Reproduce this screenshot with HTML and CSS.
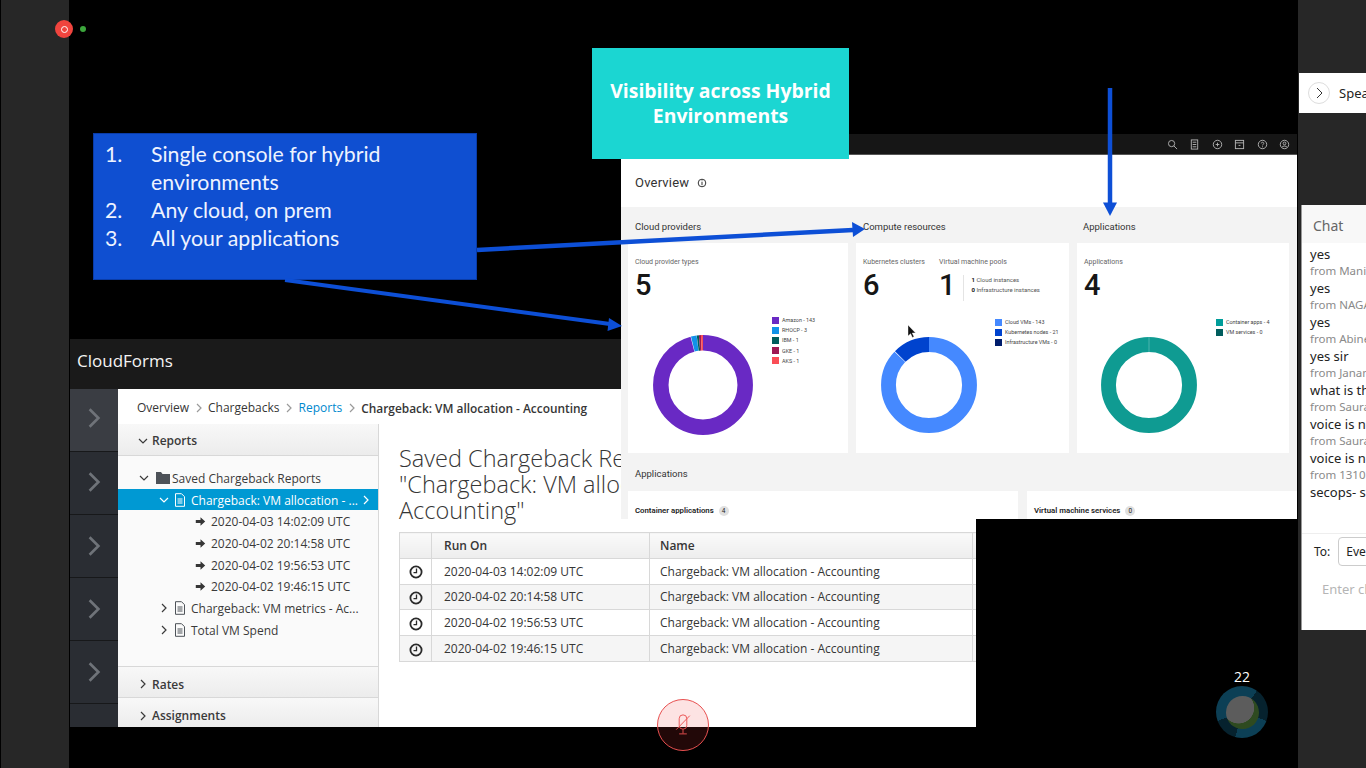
FILE: index.html
```html
<!doctype html>
<html lang="en">
<head>
  <meta charset="utf-8">
  <title>Visibility across Hybrid Environments</title>
  <link rel="stylesheet" href="styles.css">
</head>
<body>
  <svg class="defs" width="0" height="0">
    <symbol id="chev-r" viewBox="0 0 10 10"><polyline points="3,1 7,5 3,9" fill="none" stroke="currentColor" stroke-width="1.2"/></symbol>
    <symbol id="chev-d" viewBox="0 0 10 10"><polyline points="1,3 5,7 9,3" fill="none" stroke="currentColor" stroke-width="1.2"/></symbol>
    <symbol id="doc" viewBox="0 0 12 14"><path d="M1.5 .7h6l3 3v9.6h-9z" fill="none" stroke="currentColor"/><path d="M3.5 6h5M3.5 8h5M3.5 10h5" stroke="currentColor"/></symbol>
    <symbol id="arrow" viewBox="0 0 14 14"><path d="M1 5h6V1.5L13 7l-6 5.500V9H1z" fill="currentColor"/></symbol>
    <symbol id="clock" viewBox="0 0 14 14"><circle cx="7" cy="7" r="5.600" fill="none" stroke="currentColor" stroke-width="1.800"/><path d="M7.500 3.500V7.600H4.500" fill="none" stroke="currentColor" stroke-width="1.300"/></symbol>
  </svg>

  <aside class="rail-left">
    <span class="rec"><span class="rec-ring"></span></span>
  </aside>

  <main class="stage">
    <span class="live-dot"></span>

    <section class="cf">
      <header class="cf-head">CloudForms</header>
      <div class="cf-body">
        <nav class="cf-rail">
          <div class="rail-item first"><svg class="rail-chev"><use href="#chev-r"/></svg></div>
          <div class="rail-item second"><svg class="rail-chev"><use href="#chev-r"/></svg></div>
          <div class="rail-item"><svg class="rail-chev"><use href="#chev-r"/></svg></div>
          <div class="rail-item"><svg class="rail-chev"><use href="#chev-r"/></svg></div>
          <div class="rail-item"><svg class="rail-chev"><use href="#chev-r"/></svg></div>
          <div class="rail-item"></div>
        </nav>
        <div class="cf-page">
          <div class="crumbs">
            <span>Overview</span><svg class="crumb-sep"><use href="#chev-r"/></svg>
            <span>Chargebacks</span><svg class="crumb-sep"><use href="#chev-r"/></svg>
            <span class="crumb-link">Reports</span><svg class="crumb-sep"><use href="#chev-r"/></svg>
            <span class="crumb-now">Chargeback: VM allocation - Accounting</span>
          </div>
          <div class="cf-cols">
            <div class="side">
              <div class="acc-head"><svg class="ic10"><use href="#chev-d"/></svg>Reports</div>
              <div class="tree">
                <div class="node lvl0"><svg class="ic10"><use href="#chev-d"/></svg>
                  <svg class="folder" viewBox="0 0 14 12"><path d="M0 0h5l1.500 2H14v10H0z" fill="#4d5258"/></svg>Saved Chargeback Reports</div>
                <div class="node lvl1 selected"><svg class="ic10"><use href="#chev-d"/></svg><svg class="doc"><use href="#doc"/></svg>Chargeback: VM allocation - ...<svg class="ic10 sel-chev"><use href="#chev-r"/></svg></div>
                <div class="node lvl2"><svg class="ar"><use href="#arrow"/></svg>2020-04-03 14:02:09 UTC</div>
                <div class="node lvl2"><svg class="ar"><use href="#arrow"/></svg>2020-04-02 20:14:58 UTC</div>
                <div class="node lvl2"><svg class="ar"><use href="#arrow"/></svg>2020-04-02 19:56:53 UTC</div>
                <div class="node lvl2"><svg class="ar"><use href="#arrow"/></svg>2020-04-02 19:46:15 UTC</div>
                <div class="node lvl1"><svg class="ic10"><use href="#chev-r"/></svg><svg class="doc"><use href="#doc"/></svg>Chargeback: VM metrics - Ac...</div>
                <div class="node lvl1"><svg class="ic10"><use href="#chev-r"/></svg><svg class="doc"><use href="#doc"/></svg>Total VM Spend</div>
              </div>
              <div class="acc-head closed"><svg class="ic10"><use href="#chev-r"/></svg>Rates</div>
              <div class="acc-head closed last"><svg class="ic10"><use href="#chev-r"/></svg>Assignments</div>
            </div>
            <div class="report">
              <h1>Saved Chargeback Report<br>"Chargeback: VM allocation -<br>Accounting"</h1>
              <table>
                <thead><tr><th class="c-ic"></th><th class="c-run">Run On</th><th class="c-name">Name</th><th></th></tr></thead>
                <tbody>
                  <tr><td class="c-ic"><svg class="clock"><use href="#clock"/></svg></td><td class="c-run">2020-04-03 14:02:09 UTC</td><td class="c-name">Chargeback: VM allocation - Accounting</td><td></td></tr>
                  <tr><td class="c-ic"><svg class="clock"><use href="#clock"/></svg></td><td class="c-run">2020-04-02 20:14:58 UTC</td><td class="c-name">Chargeback: VM allocation - Accounting</td><td></td></tr>
                  <tr><td class="c-ic"><svg class="clock"><use href="#clock"/></svg></td><td class="c-run">2020-04-02 19:56:53 UTC</td><td class="c-name">Chargeback: VM allocation - Accounting</td><td></td></tr>
                  <tr><td class="c-ic"><svg class="clock"><use href="#clock"/></svg></td><td class="c-run">2020-04-02 19:46:15 UTC</td><td class="c-name">Chargeback: VM allocation - Accounting</td><td></td></tr>
                </tbody>
              </table>
            </div>
          </div>
        </div>
      </div>
    </section>

    <section class="ov">
      <div class="ov-bar">
        <svg class="ov-ic" viewBox="0 0 12 12"><circle cx="5" cy="5" r="3.400"/><path d="M7.500 7.500L11 11"/></svg>
        <svg class="ov-ic" viewBox="0 0 12 12"><rect x="2.500" y="1" width="7" height="10"/><path d="M4 3.500h4M4 6h4M4 8.500h4"/></svg>
        <svg class="ov-ic" viewBox="0 0 12 12"><circle cx="6" cy="6" r="4.600"/><path d="M4 6h4M6 4v4"/></svg>
        <svg class="ov-ic" viewBox="0 0 12 12"><rect x="1.500" y="1.500" width="9" height="9"/><path d="M1.500 4.200h9M5 7h2"/></svg>
        <svg class="ov-ic" viewBox="0 0 12 12"><circle cx="6" cy="6" r="4.600"/><path d="M4.700 4.800c0-1.700 2.700-1.700 2.700 0 0 1-1.400 1-1.400 2.200M6 8v1"/></svg>
        <svg class="ov-ic" viewBox="0 0 12 12"><circle cx="6" cy="6" r="4.600"/><circle cx="6" cy="4.800" r="1.500"/><path d="M3 9.200c1-2 5-2 6 0"/></svg>
      </div>
      <div class="ov-title">Overview
        <svg class="ov-info" viewBox="0 0 10 10"><circle cx="5" cy="5" r="3.800" fill="none" stroke="#333"/><path d="M5 4v3.200M5 2.500v.8" stroke="#333"/></svg>
      </div>
      <div class="ov-main">
        <div class="ov-cols">
          <div class="ov-col col-a">
            <h2>Cloud providers</h2>
            <div class="card">
              <div class="stat-label">Cloud provider types</div>
              <div class="stat-num">5</div>
              <ul class="legend lg-a">
                <li><i class="sw" style="background:#6929c4"></i>Amazon - 143</li>
                <li><i class="sw" style="background:#1192e8"></i>RHOCP - 3</li>
                <li><i class="sw" style="background:#005d5d"></i>IBM - 1</li>
                <li><i class="sw" style="background:#9f1853"></i>GKE - 1</li>
                <li><i class="sw" style="background:#fa4d56"></i>AKS - 1</li>
              </ul>
              <svg class="donut d-a" viewBox="0 0 100 100">
                <g fill="none" stroke-width="15.500" transform="rotate(-90 50 50)">
                  <circle cx="50" cy="50" r="42.200" pathLength="149" stroke="#6929c4" stroke-dasharray="143 6"/>
                  <circle cx="50" cy="50" r="42.200" pathLength="149" stroke="#1192e8" stroke-dasharray="2.700 146.300" stroke-dashoffset="-143.200"/>
                  <circle cx="50" cy="50" r="42.200" pathLength="149" stroke="#005d5d" stroke-dasharray="1 148" stroke-dashoffset="-146"/>
                  <circle cx="50" cy="50" r="42.200" pathLength="149" stroke="#9f1853" stroke-dasharray="1 148" stroke-dashoffset="-147"/>
                  <circle cx="50" cy="50" r="42.200" pathLength="149" stroke="#fa4d56" stroke-dasharray="1 148" stroke-dashoffset="-148"/>
                </g>
              </svg>
            </div>
          </div>
          <div class="ov-col col-b">
            <h2>Compute resources</h2>
            <div class="card">
              <div class="stat-row">
                <div class="stat-k">
                  <div class="stat-label">Kubernetes clusters</div>
                  <div class="stat-num">6</div>
                </div>
                <div>
                  <div class="stat-label">Virtual machine pools</div>
                  <div class="pool">
                    <div class="stat-num">1</div>
                    <div class="pool-list"><div><b>1</b> Cloud instances</div><div><b>0</b> Infrastructure instances</div></div>
                  </div>
                </div>
              </div>
              <ul class="legend lg-b">
                <li><i class="sw" style="background:#4589ff"></i>Cloud VMs - 143</li>
                <li><i class="sw" style="background:#0043ce"></i>Kubernetes nodes - 21</li>
                <li><i class="sw" style="background:#001d6c"></i>Infrastructure VMs - 0</li>
              </ul>
              <svg class="donut d-b" viewBox="0 0 100 100">
                <g fill="none" stroke-width="15.500" transform="rotate(-90 50 50)">
                  <circle cx="50" cy="50" r="42.200" pathLength="164" stroke="#4589ff" stroke-dasharray="143 21"/>
                  <circle cx="50" cy="50" r="42.200" pathLength="164" stroke="#0043ce" stroke-dasharray="20.600 143.400" stroke-dashoffset="-143.400"/>
                </g>
              </svg>
            </div>
          </div>
          <div class="ov-col col-c">
            <h2>Applications</h2>
            <div class="card">
              <div class="stat-label">Applications</div>
              <div class="stat-num">4</div>
              <ul class="legend lg-c">
                <li><i class="sw" style="background:#009d9a"></i>Container apps - 4</li>
                <li><i class="sw" style="background:#005d5d"></i>VM services - 0</li>
              </ul>
              <svg class="donut d-c" viewBox="0 0 100 100">
                <circle cx="50" cy="50" r="42.200" fill="none" stroke="#0f9b92" stroke-width="15.500"/>
                <path d="M50 0v15.500" stroke="#7cc8c3" stroke-width=".6"/>
              </svg>
            </div>
          </div>
        </div>
        <h2 class="apps-head">Applications</h2>
        <div class="apps-row">
          <div class="app-card app-wide">Container applications <span class="badge">4</span></div>
          <div class="app-card">Virtual machine services <span class="badge">0</span></div>
        </div>
      </div>
    </section>

    <section class="slide-blue">
      <ol>
        <li><span class="num">1.</span><span>Single console for hybrid environments</span></li>
        <li><span class="num">2.</span><span>Any cloud, on prem</span></li>
        <li><span class="num">3.</span><span>All your applications</span></li>
      </ol>
    </section>
    <section class="slide-teal">Visibility across Hybrid Environments</section>

    <svg class="arrows" viewBox="69 0 1229 768">
      <g fill="#0d4fd6" stroke="#0d4fd6">
        <path d="M477 250L853 230" stroke-width="4.500"/>
        <path d="M865 229L852 222L853 237z" stroke="none"/>
        <path d="M285 280L610 324" stroke-width="4"/>
        <path d="M622 326L609 318L607.500 331z" stroke="none"/>
        <path d="M1110 88V204" stroke-width="4.500"/>
        <path d="M1110 216L1103 202.500H1117z" stroke="none"/>
      </g>
      <path d="M908 325v11l2.600-2.300 1.800 3.800 1.600-.8-1.800-3.700h3.400z" fill="#111" stroke="#fff" stroke-width=".4"/>
    </svg>

    <div class="mic">
      <svg viewBox="0 0 20 26" width="18" height="22" fill="none" stroke="#ea5050" stroke-width="1.100">
        <rect x="5.500" y="1" width="9" height="17" rx="4.500"/>
        <path d="M10 18v5M5.500 23.500h9M18 2L2 18.500"/>
      </svg>
    </div>

    <div class="count">
      <span>22</span>
      <div class="orb"><div class="orb-inner"></div></div>
    </div>
  </main>

  <aside class="rail-right">
    <div class="speaker">
      <span class="speaker-btn"><svg width="14" height="14" viewBox="0 0 14 14" fill="none" stroke="#333"><polyline points="5,2 10,7 5,12"/></svg></span>
      <span>Speaker</span>
    </div>
    <div class="chat">
      <div class="chat-head">Chat</div>
      <div class="chat-list">
        <div class="msg">yes</div><div class="from">from Manish</div>
        <div class="msg">yes</div><div class="from">from NAGA</div>
        <div class="msg">yes</div><div class="from">from Abinesh</div>
        <div class="msg">yes sir</div><div class="from">from Janani</div>
        <div class="msg">what is the</div><div class="from">from Saurabh</div>
        <div class="msg">voice is not</div><div class="from">from Saurabh</div>
        <div class="msg">voice is not</div><div class="from">from 13101</div>
        <div class="msg">secops- s</div>
      </div>
      <div class="chat-to"><span>To:</span><span class="to-box">Everyone</span></div>
      <div class="chat-input">Enter chat</div>
    </div>
  </aside>
</body>
</html>
```

FILE: styles.css
```css
html, body {
  margin: 0;
  height: 100%;
}

body {
  display: flex;
  width: 1366px;
  height: 768px;
  overflow: hidden;
  background: #000;
  font-family: "Open Sans", sans-serif;
}

.defs {
  position: absolute;
}

/* zoom side rails */
.rail-left {
  width: 68px;
  border-left: 1px solid #000;
  background: #272727;
  position: relative;
  z-index: 1;
}

.rail-right {
  width: 68px;
  background: #272727;
  padding-top: 73px;
  box-sizing: border-box;
  overflow: hidden;
  color: #222;
  flex: none;
}

.rec {
  position: absolute;
  left: 54px;
  top: 20px;
  width: 18px;
  height: 18px;
  border-radius: 50%;
  background: #f0443e;
  display: flex;
  align-items: center;
  justify-content: center;
}

.rec-ring {
  width: 5px;
  height: 5px;
  border: 1.500px solid #fff;
  border-radius: 50%;
}

.stage {
  width: 1229px;
  height: 768px;
  flex: none;
  position: relative;
  background: #000;
}

.live-dot {
  position: absolute;
  left: 11px;
  top: 26px;
  width: 6px;
  height: 6px;
  border-radius: 50%;
  background: #3ca63c;
}

/* CloudForms window */
.cf {
  position: absolute;
  left: 1px;
  top: 339px;
  width: 906px;
  height: 388px;
  overflow: hidden;
  display: flex;
  flex-direction: column;
}

.cf-head {
  height: 50px;
  flex: none;
  background: #1a1a1a;
  color: #f4f4f4;
  font-size: 17px;
  line-height: 44px;
  padding-left: 7px;
}

.cf-body {
  flex: 1;
  display: flex;
  min-height: 0;
}

.cf-rail {
  width: 48px;
  flex: none;
  background: #17181a;
  overflow: hidden;
}

.rail-item {
  height: 62px;
  margin-bottom: 1px;
  box-sizing: border-box;
  background: #2a2d33;
  display: flex;
  align-items: center;
  justify-content: center;
}

.rail-item.first {
  background: #3a3d43;
  padding-bottom: 4px;
}

.rail-item.second {
  padding-bottom: 2px;
}

.rail-chev {
  width: 22px;
  height: 22px;
  color: #6f7379;
}

.cf-page {
  flex: 1;
  background: #fff;
  display: flex;
  flex-direction: column;
  min-width: 0;
}

.crumbs {
  height: 35px;
  flex: none;
  box-sizing: border-box;
  display: flex;
  align-items: center;
  padding: 2px 0 0 19px;
  font-size: 12px;
  color: #363636;
}

.crumb-sep {
  width: 10px;
  height: 10px;
  margin: 0 4.500px;
  color: #9a9a9a;
}

.crumb-link {
  color: #0088ce;
}

.crumb-now {
  font-size: 11.900px;
  font-weight: 600;
}

.cf-cols {
  flex: 1;
  display: flex;
  min-height: 0;
}

.side {
  width: 260px;
  flex: none;
  background: #fafafa;
  border-right: 1px solid #d8d8d8;
  color: #3a3a3a;
  display: flex;
  flex-direction: column;
  font-size: 12px;
}

.acc-head {
  height: 32px;
  flex: none;
  box-sizing: border-box;
  background: linear-gradient(#f8f8f8, #ececec);
  border-bottom: 1px solid #d8d8d8;
  font-weight: 600;
  display: flex;
  align-items: center;
  padding: 2px 0 0 20px;
  gap: 4px;
}

.acc-head.closed {
  border-top: 1px solid #d8d8d8;
  height: 32px;
  padding-top: 4px;
}

.acc-head.last {
  border-top: none;
  border-bottom: none;
  height: 29px;
  padding-top: 6px;
}

.ic10 {
  width: 10px;
  height: 10px;
  flex: none;
}

.tree {
  flex: 1;
  padding-top: 11px;
}

.node {
  height: 21.700px;
  box-sizing: border-box;
  padding-top: 1px;
  display: flex;
  align-items: center;
  white-space: nowrap;
}

.lvl0 {
  padding-left: 21px;
}

.lvl1 {
  padding-left: 41px;
}

.lvl2 {
  padding-left: 77px;
}

.folder {
  width: 14px;
  height: 12px;
  margin: 0 2px 0 7px;
}

.doc {
  width: 12px;
  height: 14px;
  margin: 0 5px 0 5px;
  color: #4d5258;
}

.ar {
  width: 11px;
  height: 11px;
  margin-right: 5px;
  color: #363636;
}

.selected {
  background: #0099d3;
  color: #fff;
}

.selected .doc {
  color: #fff;
}

.sel-chev {
  margin-left: 3px;
}

.report {
  flex: 1;
  padding-left: 20px;
  min-width: 0;
}

.report h1 {
  margin: 21px 0 9px;
  font-size: 23.500px;
  line-height: 26px;
  font-weight: 300;
  color: #363636;
  white-space: nowrap;
}

table {
  border-collapse: collapse;
  width: 580px;
  table-layout: fixed;
  font-size: 12px;
  color: #363636;
}

th, td {
  border: 1px solid #d8d8d8;
  height: 24.750px;
  padding: 0 0 0 11px;
  text-align: left;
  white-space: nowrap;
}

th {
  background: linear-gradient(#fafafa, #ededed);
  font-weight: 600;
}

tbody tr:nth-child(even) {
  background: #f5f5f5;
}

th.c-ic, td.c-ic {
  width: 32px;
  padding: 0;
  text-align: center;
  box-sizing: border-box;
}

th.c-run, td.c-run {
  width: 205px;
  padding-left: 12px;
}

th.c-name, td.c-name {
  width: 312px;
  padding-left: 10px;
}

.clock {
  width: 14px;
  height: 14px;
  vertical-align: middle;
  color: #2a2a2a;
}

/* Overview window */
.ov {
  position: absolute;
  left: 552px;
  top: 134px;
  width: 676px;
  height: 385px;
  overflow: hidden;
  background: #fff;
  font-family: Roboto, sans-serif;
  color: #222;
  display: flex;
  flex-direction: column;
}

.ov-bar {
  height: 21px;
  flex: none;
  background: #161616;
  border-bottom: 1px solid #555;
  box-sizing: border-box;
  display: flex;
  justify-content: flex-end;
  align-items: center;
  gap: 11.500px;
  padding-right: 7px;
}

.ov-ic {
  width: 11px;
  height: 11px;
  fill: none;
  stroke: #b5b5b5;
  stroke-width: 1;
}

.ov-title {
  height: 52px;
  flex: none;
  box-sizing: border-box;
  font-size: 13px;
  letter-spacing: .2px;
  display: flex;
  align-items: center;
  gap: 8px;
  padding: 3px 0 0 14px;
  color: #333;
}

.ov-info {
  width: 10px;
  height: 10px;
}

.ov-main {
  flex: 1;
  background: #f3f3f3;
  padding: 0 7px 0 7px;
  min-height: 0;
}

.ov-cols {
  display: grid;
  grid-template-columns: 220px 213px 212px;
  column-gap: 8px;
}

.ov-main h2 {
  margin: 0;
  height: 36px;
  line-height: 40px;
  font-size: 9.500px;
  font-weight: 400;
  color: #333;
  padding-left: 7px;
  white-space: nowrap;
}

.col-b h2 {
  padding-left: 7px;
}

.col-c h2 {
  padding-left: 6px;
}

.card {
  background: #fff;
  height: 210px;
  position: relative;
  padding: 15px 7px 0;
  box-sizing: border-box;
}

.stat-label {
  font-size: 7px;
  color: #666;
  white-space: nowrap;
}

.stat-num {
  font-size: 29px;
  line-height: 32px;
  font-weight: 500;
  color: #161616;
  margin-top: 3px;
}

.stat-row {
  display: flex;
}

.stat-k {
  width: 76px;
}

.pool {
  display: flex;
}

.pool-list {
  margin: 9px 0 0 8px;
  padding-left: 7px;
  border-left: 1px solid #e4e4e4;
  font-size: 6px;
  line-height: 9.500px;
  color: #555;
  white-space: nowrap;
}

.pool-list b {
  color: #161616;
}

.legend {
  position: absolute;
  list-style: none;
  margin: 0;
  padding: 0;
  font-size: 5.400px;
  color: #444;
  white-space: nowrap;
}

.legend li {
  height: 10.200px;
  display: flex;
  align-items: center;
  gap: 3px;
}

.sw {
  width: 7px;
  height: 7px;
  flex: none;
}

.lg-a {
  left: 144px;
  top: 72px;
}

.lg-b {
  left: 139px;
  top: 74px;
}

.lg-c {
  left: 139px;
  top: 74px;
}

.donut {
  position: absolute;
}

.d-a {
  left: 25px;
  top: 92px;
  width: 100px;
  height: 100px;
}

.d-b {
  left: 25px;
  top: 94px;
  width: 96px;
  height: 96px;
}

.d-c {
  left: 24px;
  top: 94px;
  width: 96px;
  height: 96px;
}

.ov-main .apps-head {
  height: 38px;
  line-height: 42px;
}

.apps-row {
  display: grid;
  grid-template-columns: 390px 290px;
  column-gap: 9px;
}

.app-card {
  background: #fff;
  height: 60px;
  padding: 15px 7px;
  box-sizing: border-box;
  font-size: 7.800px;
  font-weight: 600;
  color: #222;
  white-space: nowrap;
}

.badge {
  display: inline-block;
  width: 10px;
  height: 10px;
  margin-left: 3px;
  line-height: 10px;
  border-radius: 50%;
  background: #e0e0e0;
  text-align: center;
  font-weight: 400;
  font-size: 6.500px;
}

/* slide callouts */
.slide-blue {
  position: absolute;
  left: 24px;
  top: 133px;
  width: 384px;
  height: 147px;
  box-sizing: border-box;
  background: #0f4fd1;
  border: 1px solid #0a3ca8;
  color: #eef3ff;
  font-family: Lato, sans-serif;
  font-size: 21.300px;
  line-height: 28px;
}

.slide-blue ol {
  list-style: none;
  margin: 6px 0 0;
  padding: 0 0 0 11px;
}

.slide-blue li {
  display: flex;
}

.num {
  width: 46px;
  flex: none;
}

.slide-teal {
  position: absolute;
  left: 523px;
  top: 48px;
  width: 257px;
  height: 111px;
  box-sizing: border-box;
  padding: 30px 10px 0;
  background: #1bd6d2;
  color: #fff;
  font-size: 19.400px;
  line-height: 25px;
  font-weight: 700;
  text-align: center;
}

.arrows {
  position: absolute;
  left: 0;
  top: 0;
  width: 1229px;
  height: 768px;
  pointer-events: none;
}

.mic {
  position: absolute;
  left: 588px;
  top: 699px;
  width: 52px;
  height: 52px;
  box-sizing: border-box;
  border: 1px solid #e85050;
  border-radius: 50%;
  background: rgba(240, 60, 60, .14);
  display: flex;
  align-items: center;
  justify-content: center;
}

.count {
  position: absolute;
  left: 1147px;
  top: 668px;
  width: 52px;
  display: flex;
  flex-direction: column;
  align-items: center;
  color: #fff;
  font-size: 14px;
  line-height: 18px;
  gap: 0;
}

.orb {
  width: 52px;
  height: 52px;
  border-radius: 50%;
  background: conic-gradient(#0c3f55 0 35deg, #06222e 35deg 110deg, #0c3f55 110deg 195deg, #06222e 195deg 250deg, #0c3f55 250deg);
  display: flex;
  align-items: center;
  justify-content: center;
}

.orb-inner {
  width: 33px;
  height: 33px;
  border-radius: 50%;
  background: radial-gradient(circle at 38% 36%, #5c5c5c 52%, #2e4a20 54%);
}

/* right hand panel */
.speaker {
  margin-left: 1px;
  width: 67px;
  height: 40px;
  background: #fff;
  display: flex;
  align-items: center;
  gap: 9px;
  padding-left: 9px;
  box-sizing: border-box;
  font-size: 13px;
  white-space: nowrap;
  font-family: "Noto Sans", sans-serif;
}

.speaker-btn {
  width: 22px;
  height: 22px;
  flex: none;
  border: 1px solid #ddd;
  border-radius: 50%;
  box-sizing: border-box;
  display: flex;
  align-items: center;
  justify-content: center;
}

.chat {
  margin: 92px 0 0 3px;
  width: 65px;
  height: 425px;
  border-left: 1px solid #999;
  background: #fff;
  box-sizing: border-box;
  overflow: hidden;
  white-space: nowrap;
  font-family: "Noto Sans", sans-serif;
}

.chat-head {
  height: 38px;
  background: #f8f8f8;
  line-height: 42px;
  padding-left: 11px;
  font-size: 14px;
  color: #666;
}

.chat-list {
  height: 291px;
  padding: 3px 0 0 8px;
  border-bottom: 1px solid #eee;
  box-sizing: border-box;
}

.msg {
  font-size: 13px;
  line-height: 17px;
  margin-top: 0;
  color: #222;
}

.from {
  margin: -1px 0 1px;
  font-size: 11.500px;
  line-height: 17px;
  color: #8a8a8a;
}

.chat-to {
  display: flex;
  align-items: center;
  gap: 8px;
  height: 34px;
  padding-left: 12px;
  font-size: 12px;
}

.to-box {
  border: 1px solid #ccc;
  border-radius: 4px;
  height: 27px;
  line-height: 27px;
  padding-left: 7px;
  width: 80px;
  flex: none;
}

.chat-input {
  padding: 12px 0 0 20px;
  font-size: 13px;
  color: #b5b5b5;
}
```
